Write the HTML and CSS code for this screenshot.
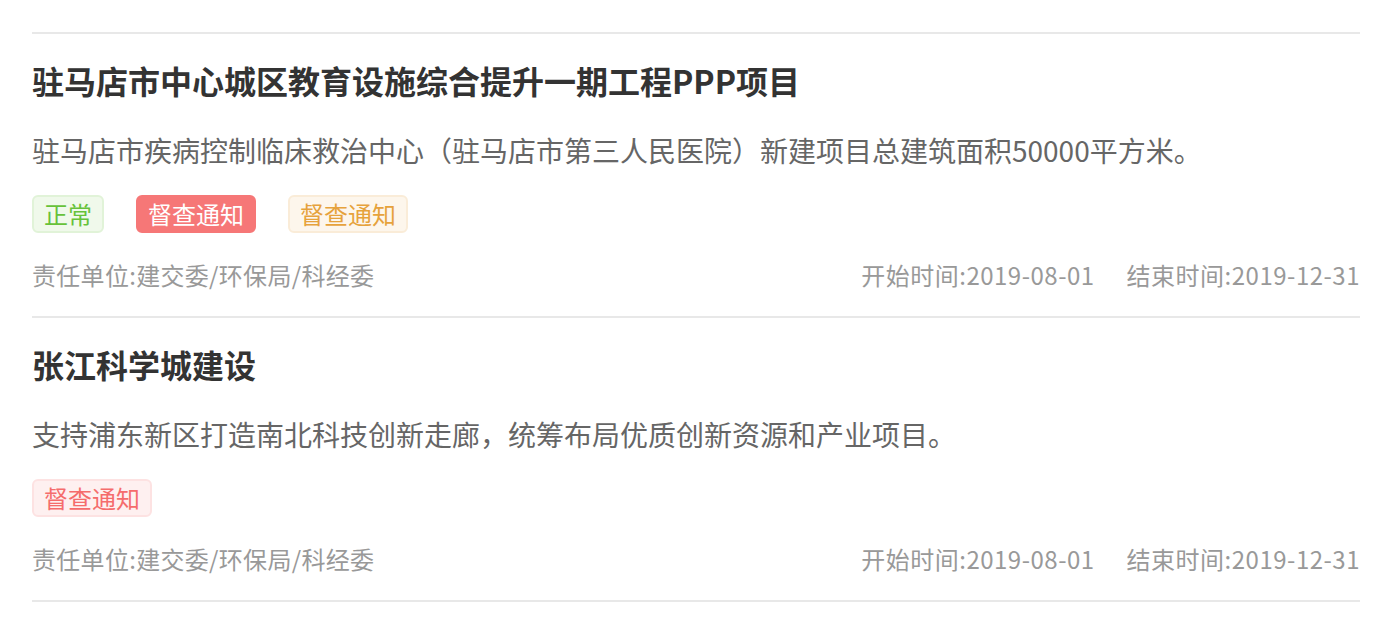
FILE: index.html
```html
<!DOCTYPE html>
<html lang="zh">
<head>
<meta charset="utf-8">
<link rel="stylesheet" href="styles.css">
</head>
<body>
<div class="page">
  <div class="list">
    <div class="item">
      <div class="title">驻马店市中心城区教育设施综合提升一期工程PPP项目</div>
      <div class="desc">驻马店市疾病控制临床救治中心（驻马店市第三人民医院）新建项目总建筑面积50000平方米。</div>
      <div class="tags">
        <span class="tag tag-success">正常</span>
        <span class="tag tag-danger-dark">督查通知</span>
        <span class="tag tag-warning">督查通知</span>
      </div>
      <div class="meta">
        <span class="unit">责任单位:建交委/环保局/科经委</span>
        <div class="dates">
          <span>开始时间:2019-08-01</span>
          <span>结束时间:2019-12-31</span>
        </div>
      </div>
    </div>
    <div class="item">
      <div class="title">张江科学城建设</div>
      <div class="desc">支持浦东新区打造南北科技创新走廊，统筹布局优质创新资源和产业项目。</div>
      <div class="tags">
        <span class="tag tag-danger">督查通知</span>
      </div>
      <div class="meta">
        <span class="unit">责任单位:建交委/环保局/科经委</span>
        <div class="dates">
          <span>开始时间:2019-08-01</span>
          <span>结束时间:2019-12-31</span>
        </div>
      </div>
    </div>
  </div>
</div>
</body>
</html>
```

FILE: styles.css
```css
* { box-sizing: border-box; }
html, body {
  margin: 0;
  padding: 0;
  background: #ffffff;
}
body {
  font-family: "Noto Sans CJK SC", "Noto Sans", sans-serif;
}
.page {
  padding: 32px 32px 0 32px;
}
.list {
  border-top: 2px solid #e8e8e8;
}
.item {
  padding: 24px 0 24px 0;
  border-bottom: 2px solid #e8e8e8;
}
.title {
  font-size: 32px;
  line-height: 44px;
  font-weight: 700;
  color: #333333;
}
.desc {
  margin-top: 28px;
  font-size: 28px;
  line-height: 40px;
  color: #666666;
}
.tags {
  margin-top: 25px;
  display: flex;
  gap: 32px;
}
.tag {
  display: inline-flex;
  align-items: center;
  height: 38px;
  padding: 0 10px;
  font-size: 24px;
  line-height: 1;
  border-radius: 6px;
  border: 2px solid transparent;
}
.tag-success {
  background: #f0f9eb;
  border-color: #e1f3d8;
  color: #67c23a;
}
.tag-danger-dark {
  background: #f67777;
  border-color: #f67777;
  color: #ffffff;
}
.tag-warning {
  background: #fdf6ec;
  border-color: #faecd8;
  color: #e6a23c;
}
.tag-danger {
  background: #fef0f0;
  border-color: #fde2e2;
  color: #f56c6c;
}
.meta {
  margin-top: 25px;
  display: flex;
  justify-content: space-between;
  align-items: center;
  font-size: 24px;
  line-height: 34px;
  color: #999999;
}
.unit {
  letter-spacing: 0.3px;
}
.dates {
  display: flex;
  gap: 32px;
  letter-spacing: 0.5px;
}
```
